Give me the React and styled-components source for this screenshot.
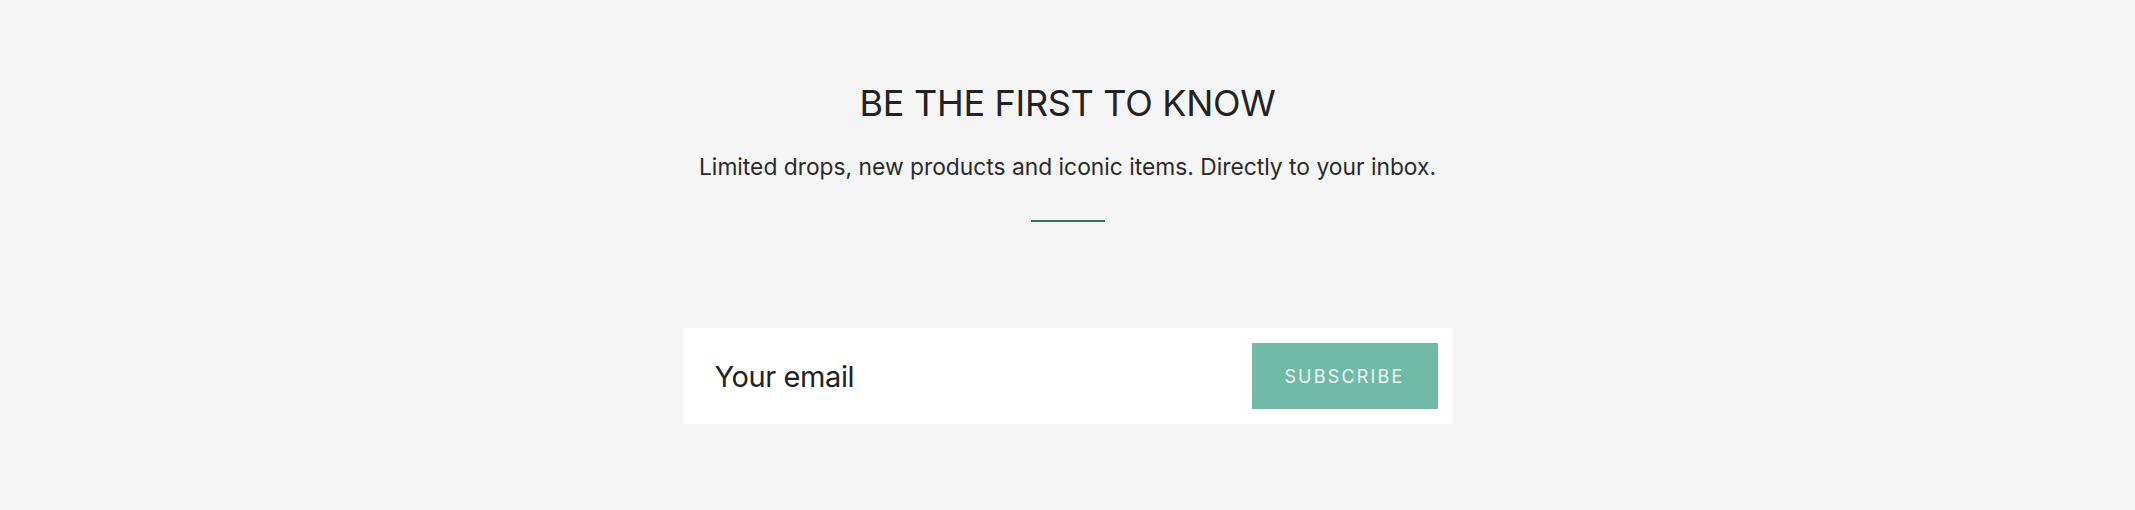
import React from 'react';
import styled, { createGlobalStyle } from 'styled-components';

const GlobalStyle = createGlobalStyle`
  html, body {
    margin: 0;
    padding: 0;
    background: #f5f5f5;
  }
  body {
    font-family: Inter, "Noto Sans", sans-serif;
    color: #222222;
  }
`;

const Section = styled.section`
  height: 510px;
  background: #f5f5f5;
  display: flex;
  flex-direction: column;
  align-items: center;
  padding-top: 80px;
  box-sizing: border-box;
`;

const Title = styled.h2`
  margin: 0;
  font-size: 36px;
  line-height: 46px;
  font-weight: 400;
  letter-spacing: -0.3px;
  color: #222222;
`;

const Subtitle = styled.p`
  margin: 26px 0 0;
  font-size: 22.8px;
  line-height: 30px;
  font-weight: 400;
  color: #2a2a2a;
`;

const Divider = styled.hr`
  width: 74px;
  height: 2px;
  border: 0;
  margin: 38px 0 0;
  background: #2f7564;
`;

const Form = styled.form`
  margin-top: 106px;
  width: 770px;
  height: 96px;
  box-sizing: border-box;
  padding: 15px;
  background: #ffffff;
  display: flex;
  align-items: stretch;
`;

const EmailInput = styled.input`
  flex: 1;
  border: 0;
  outline: none;
  background: transparent;
  padding: 0 0 0 17px;
  font-family: Inter, "Noto Sans", sans-serif;
  font-size: 29px;
  letter-spacing: -0.4px;
  color: #222222;

  &::placeholder {
    color: #222222;
    opacity: 1;
  }
`;

const SubscribeButton = styled.button`
  width: 186px;
  border: 0;
  background: #71baa8;
  color: #eef7f4;
  font-family: Inter, "Noto Sans", sans-serif;
  font-size: 18px;
  letter-spacing: 2.2px;
  text-transform: uppercase;
  cursor: pointer;
`;

export default function App() {
  return (
    <>
      <GlobalStyle />
      <Section>
        <Title>BE THE FIRST TO KNOW</Title>
        <Subtitle>Limited drops, new products and iconic items. Directly to your inbox.</Subtitle>
        <Divider />
        <Form onSubmit={(e) => e.preventDefault()}>
          <EmailInput type="email" placeholder="Your email" />
          <SubscribeButton type="submit">Subscribe</SubscribeButton>
        </Form>
      </Section>
    </>
  );
}
